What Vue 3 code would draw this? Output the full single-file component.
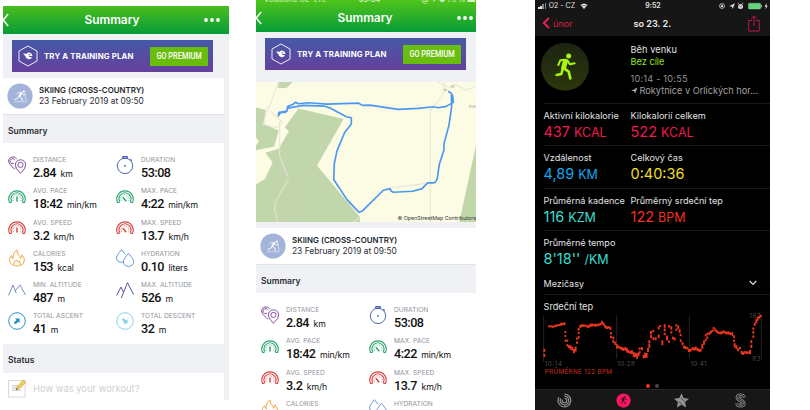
<script setup>
const stats = [
  { icon: 'pins', color: '#7d4a9c', label: 'DISTANCE', value: '2.84', unit: 'km' },
  { icon: 'watch', color: '#4a5fae', label: 'DURATION', value: '53:08', unit: '' },
  { icon: 'gauge', color: '#2aa56f', label: 'AVG. PACE', value: '18:42', unit: 'min/km', needle: 0 },
  { icon: 'gauge', color: '#2aa56f', label: 'MAX. PACE', value: '4:22', unit: 'min/km', needle: -40 },
  { icon: 'gauge', color: '#d8433f', label: 'AVG. SPEED', value: '3.2', unit: 'km/h', needle: 0 },
  { icon: 'gauge', color: '#d8433f', label: 'MAX. SPEED', value: '13.7', unit: 'km/h', needle: -40 },
  { icon: 'fire', color: '#f0a13a', label: 'CALORIES', value: '153', unit: 'kcal' },
  { icon: 'drops', color: '#5f95dd', label: 'HYDRATION', value: '0.10', unit: 'liters' },
  { icon: 'peaks', color: '#7286bb', label: 'MIN. ALTITUDE', value: '487', unit: 'm' },
  { icon: 'peaksHigh', color: '#51489d', label: 'MAX. ALTITUDE', value: '526', unit: 'm' },
  { icon: 'arrow', color: '#1f8fbd', label: 'TOTAL ASCENT', value: '41', unit: 'm', turn: 0 },
  { icon: 'arrow', color: '#7fd3e0', label: 'TOTAL DESCENT', value: '32', unit: 'm', turn: 90 },
]

const screens = [
  { id: 'plain', map: false, items: stats },
  { id: 'mapped', map: true, items: stats.slice(0, 8).map((t, i) => (i < 6 ? t : { ...t, value: '', unit: '' })) },
]

const workout = [
  [
    { label: 'Aktivní kilokalorie', value: '437', unit: 'KCAL', tone: 'pink' },
    { label: 'Kilokalorií celkem', value: '522', unit: 'KCAL', tone: 'pink' },
  ],
  [
    { label: 'Vzdálenost', value: '4,89', unit: 'KM', tone: 'blue' },
    { label: 'Celkový čas', value: '0:40:36', unit: '', tone: 'yellow' },
  ],
  [
    { label: 'Průměrná kadence', value: '116', unit: 'KZM', tone: 'cyan' },
    { label: 'Průměrný srdeční tep', value: '122', unit: 'BPM', tone: 'red' },
  ],
  [{ label: 'Průměrné tempo', value: "8'18''", unit: '/KM', tone: 'cyan' }],
]

// Heart-rate samples: x, centre y, bar height
const beats = [
  [43, 165, 8], [43, 180, 8], [57, 93, 5], [63, 93, 5], [68, 94, 6], [73, 93, 5], [78, 91, 6], [83, 90, 5], [88, 89, 5],
  [93, 87, 8], [98, 86, 6], [103, 85, 8], [106, 110, 5], [106, 122, 5], [107, 136, 6], [112, 136, 5], [112, 150, 6],
  [117, 154, 8], [122, 157, 12], [127, 160, 10], [132, 167, 12], [137, 161, 14], [141, 130, 5], [141, 142, 6],
  [146, 102, 7], [146, 113, 5], [146, 126, 6], [151, 93, 9], [156, 91, 7], [161, 91, 6], [166, 91, 5], [171, 93, 6],
  [176, 94, 8], [181, 90, 9], [186, 89, 8], [191, 89, 6], [196, 90, 8], [201, 89, 6], [206, 89, 7], [211, 86, 6],
  [216, 82, 10], [221, 87, 8], [226, 94, 9], [231, 97, 7], [236, 96, 6], [241, 99, 8], [243, 114, 6], [243, 125, 6],
  [250, 128, 7], [250, 139, 8], [256, 144, 10], [261, 153, 12], [266, 155, 7], [271, 158, 7], [276, 160, 10],
  [281, 162, 8], [286, 160, 10], [291, 165, 12], [296, 169, 8], [301, 171, 8], [306, 170, 10], [311, 178, 14],
  [316, 179, 12], [321, 182, 16], [326, 177, 10], [329, 160, 6], [329, 171, 6], [336, 160, 8], [341, 184, 10],
  [345, 180, 15], [350, 180, 14], [354, 164, 12], [358, 139, 8], [358, 151, 12], [363, 112, 10], [363, 124, 8],
  [370, 107, 6], [370, 130, 7], [377, 130, 8], [386, 98, 8], [386, 123, 10], [391, 92, 5], [397, 142, 14],
  [404, 92, 10], [404, 104, 8], [404, 116, 6], [411, 128, 14], [417, 93, 6], [417, 139, 6], [424, 98, 10],
  [424, 111, 6], [429, 128, 7], [434, 131, 8], [439, 90, 6], [439, 103, 6], [445, 96, 10], [449, 107, 9],
  [452, 119, 6], [452, 136, 7], [458, 145, 8], [462, 155, 8], [467, 157, 8], [472, 159, 6], [477, 165, 9],
  [482, 165, 7], [487, 160, 7], [492, 161, 8], [497, 159, 10], [502, 162, 8], [507, 165, 8], [512, 165, 7],
  [517, 153, 14], [522, 142, 12], [527, 120, 6], [527, 134, 7], [532, 116, 6], [532, 127, 6], [538, 114, 8],
  [543, 110, 8], [548, 106, 6], [551, 98, 5], [556, 104, 8], [561, 109, 8], [566, 112, 6], [571, 113, 7],
  [576, 112, 8], [581, 109, 7], [586, 112, 7], [591, 113, 7], [596, 113, 8], [601, 115, 7], [607, 116, 10],
  [612, 124, 7], [612, 136, 6], [614, 150, 12], [619, 155, 10], [624, 163, 8], [630, 158, 6], [635, 172, 9],
  [640, 174, 9], [645, 171, 6], [650, 172, 7], [655, 172, 6], [660, 170, 12], [664, 139, 8], [664, 153, 9],
  [670, 100, 6], [670, 111, 7], [670, 124, 6], [674, 87, 8], [679, 78, 12], [683, 70, 11], [688, 66, 7], [692, 62, 6],
]
</script>

<template>
  <main class="board">
    <section v-for="s in screens" :key="s.id" class="endo" :class="s.id">
      <div v-if="s.map" class="carrier">
        <span>Vodafone CZ&nbsp; LTE</span><span class="clock">09:54</span><span>@ ✈ ● 75 % ▬</span>
      </div>
      <header class="bar">
        <svg class="back" viewBox="0 0 6 14"><path d="M5.2 1 L.2 7 L5.2 13" /></svg>
        <h1>Summary</h1>
        <svg class="more" viewBox="0 0 16 4"><circle cx="2" cy="2" r="1.9" /><circle cx="8" cy="2" r="1.9" /><circle cx="14" cy="2" r="1.9" /></svg>
      </header>
      <div class="promo">
        <svg viewBox="0 0 20 22">
          <path class="hex" d="M10 1 L19 6 V16 L10 21 L1 16 V6 Z" />
          <path class="cap" d="M5 8.6 L8.6 8.8 Q10 7.2 12 7.7 Q14.6 8.6 14.4 11 H10.8 Q11.2 12.5 14.2 12 Q13 14.6 10.4 14.3 Q7.6 13.8 7.4 11.2 Z" />
          <path d="M10.4 9.8 H12.6" stroke="#584ca0" stroke-width=".8" />
        </svg>
        <span class="plan">TRY A TRAINING PLAN</span>
        <span class="premium"><span>GO PREMIUM</span></span>
      </div>

      <div v-if="s.map" class="map">
        <svg viewBox="33 36 660 419" preserveAspectRatio="none">
          <rect x="33" y="36" width="660" height="419" fill="#fcfbe4" />
          <g fill="#c2d6ac">
            <path d="M102 36 H143 L125 53 L98 55 Z" />
            <path d="M33 112 L62 120 L57 163 L101 181 L88 229 L33 240 V226 L42 213 L33 201 Z" />
            <path d="M160 115 L296 147 L216 286 L345 441 V455 H33 V342 L59 327 L83 277 L61 248 L101 236 L132 183 L119 173 Z" />
            <path d="M693 225 V455 H643 Z" />
          </g>
          <g fill="none" stroke="#e6e4d8" stroke-width="3">
            <path d="M100 36 L75 105 L64 125 L55 163 L95 173 L112 156 L75 123" />
            <path d="M104 154 V258 L131 326 L91 396 L89 420 L98 455" />
            <path d="M103 265 L121 314 L169 371 V396 L139 423 L123 455" stroke="#cad1b9" />
            <path d="M556 455 V120 L592 78 L600 36" />
            <path d="M578 36 L613 52 L628 43 L665 60 L693 50" />
            <path d="M345 441 L327 455 M436 353 L549 338" />
          </g>
          <g fill="#ccc9bd"><rect x="597" y="56" width="9" height="7" /><rect x="618" y="46" width="10" height="7" /></g>
          <text x="671" y="114" class="place">Rok</text>
          <path class="track" d="M100 137 L102 127 L113 125 L126 123 L128 109 L142 104 L151 97 L161 101 L190 98 L246 102 L340 99 L352 106 L374 105 L460 118 L520 115 L565 110 L579 113 L604 109 L625 97 L623 77 L617 68 L611 65 M619 70 L620 110 L612 165 L597 220 V239 L583 282 L577 323 Q574 337 565 338 H548 L530 356 L502 363 L445 366 L438 362 L435 355 L415 360 L351 423 L342 426 L306 388 L266 328 L268 280 L276 242 L299 187 L319 162 V143 L304 140 L258 115 L237 108 L175 106 L129 114 L123 126 L106 128 L100 137" />
        </svg>
        <span class="credit">© OpenStreetMap Contributors</span>
      </div>

      <div class="sport">
        <svg viewBox="0 0 26 26">
          <circle cx="13" cy="13" r="12.6" fill="#a4b3da" />
          <g stroke="#fff" stroke-linecap="round" stroke-linejoin="round" fill="none">
            <circle cx="16.8" cy="8.6" r=".9" fill="#fff" stroke-width=".5" />
            <path d="M14.4 10 L12.4 13" stroke-width="2" />
            <path d="M14.2 9.7 L11 9.7 L9.5 11.2 M15 10.4 L16 12 L18.2 11.5" stroke-width=".8" />
            <path d="M12.4 13.4 L14.8 15 L15.2 17.6 M11.8 13.4 L10.6 15.6 L7.8 16.4" stroke-width="1" />
            <path d="M18 10.6 L19 17.6 M7 18.8 H19.5" stroke-width=".5" />
          </g>
        </svg>
        <div><b>SKIING (CROSS-COUNTRY)</b><p>23 February 2019 at 09:50</p></div>
      </div>
      <h2>Summary</h2>
      <div class="grid">
        <div v-for="t in s.items" :key="t.label" class="stat">
          <svg class="glyph" viewBox="0 0 18 18" :stroke="t.color" :fill="t.color">
            <g v-if="t.icon === 'pins'" class="line">
              <path d="M7.3 12.3 Q6.3 13.3 5.6 12.1 Q0.5 8.1 .5 5 A4.5 4.5 0 0 1 8.8 3" /><path d="M6.9 4.2 A2.5 2.5 0 1 0 6 7.2" />
              <path d="M12.5 17.4 Q7.3 12.4 7.3 9 A5.2 5.2 0 0 1 17.7 9 Q17.7 12.4 12.5 17.4 Z" /><circle cx="12.5" cy="8.9" r="2.6" />
            </g>
            <g v-else-if="t.icon === 'watch'" class="line">
              <path d="M6.8 3 V.6 H11.2 V3 M14.2 3.3 L15.8 4.6 M7.3 2.2 H10.7" stroke-width="1.1" /><circle cx="9" cy="9.9" r="7.7" /><circle cx="9" cy="9.9" r=".6" />
            </g>
            <g v-else-if="t.icon === 'gauge'" class="line">
              <path d="M3.6 15.4 H1.5 A8.2 8.2 0 1 1 16.5 15.4 H14.4" stroke-width="1.1" />
              <path d="M3.9 14.8 A5.9 5.9 0 1 1 14.1 14.8" stroke-width="1.1" />
              <path d="M5.4 13.6 A4 4 0 1 1 12.6 13.6" stroke-width=".9" stroke-dasharray="1 1.2" />
              <path d="M9 9.6 V14.6" stroke-width="1.5" :transform="`rotate(${t.needle} 9 12.8)`" />
            </g>
            <g v-else-if="t.icon === 'fire'" class="line">
              <path d="M6 16.7 Q1 14.8 1.5 10.5 Q1.8 8 3.6 6.7 Q3.7 9.2 5.2 9.8 Q4.4 4.1 9 .9 Q8.4 4.3 11.2 6.4 Q12.5 7.6 12.5 9.5 Q14 8.2 14 5.8 Q16.7 8.7 16.4 11.5 Q16 15.7 12 16.7" />
              <path d="M7.6 17 Q5.3 15.8 6.2 13.2 Q6.7 12 8.5 11 Q8.4 12.4 9.6 13 Q10.8 12.8 11 11.7 Q12.8 14 11.7 16 Q10.5 17.6 7.6 17 Z" />
            </g>
            <g v-else-if="t.icon === 'drops'" class="line">
              <path d="M5.5 .7 Q.5 6.3 .5 9 Q.5 12.6 4.2 13.3 Q6.5 13.6 7.8 12.2 M5.5 .7 L9.1 5.4" />
              <path d="M12.5 4.4 Q17.7 10.2 17.7 12.7 A5.2 4.8 0 0 1 7.3 12.7 Q7.3 10.2 12.5 4.4 Z" />
            </g>
            <path v-else-if="t.icon === 'peaks'" class="line" d="M.6 14.4 L4.9 4 L8.2 12 M7 10 L12 4 L17.5 14" />
            <path v-else-if="t.icon === 'peaksHigh'" class="line" d="M.6 14.5 L5 6 L7.2 11 M5.3 17 L11.5 1.6 L17.6 13.6" />
            <g v-else :transform="`rotate(${t.turn} 9 9)`">
              <circle cx="9" cy="9" r="8.3" class="line" /><path d="M7 6.5 H11.6 V11.1 L10.2 9.8 L7.5 12.2 L5.9 10.7 L8.5 8 Z" stroke="none" />
            </g>
          </svg>
          <div class="info"><span class="label">{{ t.label }}</span><span v-if="t.value" class="value">{{ t.value }}<small v-if="t.unit">{{ t.unit }}</small></span></div>
        </div>
      </div>
      <template v-if="!s.map">
        <h2 class="status">Status</h2>
        <div class="note">
          <svg viewBox="0 0 19 19">
            <rect x=".6" y="1.6" width="16.5" height="16.5" fill="#fff" stroke="#d3d5d8" stroke-width=".9" />
            <path d="M4 6.8 H10 M4 9 H9 M4 11.2 H13" stroke="#aaa" stroke-width=".7" />
            <path d="M8 11 L9.3 7.4 L15.2 1 L17.8 3.2 L11.8 9.5 Z" fill="#f4cc59" stroke="#bd9146" stroke-width=".5" /><path d="M8 11 L8.7 9 L10 10.2 Z" fill="#555" />
          </svg>
          <span>How was your workout?</span>
        </div>
      </template>
    </section>

    <section class="watch">
      <header class="top">
        <div class="system">
          <div class="signal"><i></i><i></i><i></i><i></i><span>O2 - CZ</span>
            <svg viewBox="0 0 8 6"><path d="M.5 2 Q4 -1 7.5 2 L4 6 Z" fill="#ddd" /><path d="M1.6 3.2 Q4 1.4 6.4 3.2" stroke="#161616" stroke-width=".5" fill="none" /></svg></div>
          <b>9:52</b>
          <svg class="power" viewBox="0 0 50 8">
            <circle cx="4" cy="4" r="2.4" fill="none" stroke="#ddd" stroke-width=".8" /><rect x="3" y="3.2" width="2" height="1.8" fill="#ddd" />
            <path d="M11 4.2 L17 1.2 L14.6 7 L13.9 4.4 Z" fill="#ddd" />
            <circle cx="22.5" cy="4.4" r="2.5" fill="#ddd" /><path d="M19.8 1.7 L21 1 M25.2 1.7 L24 1" stroke="#ddd" stroke-width=".8" fill="none" /><path d="M21.2 3.5 L22.4 4.9 L24 3.6" stroke="#222" stroke-width=".6" fill="none" />
            <rect x="30.4" y="1.2" width="12.2" height="5.8" rx="1" fill="#62d578" stroke="#9bdaa5" stroke-width=".4" /><rect x="43" y="3" width="1" height="2.4" fill="#aaa" />
            <path d="M48.8 1 L46.5 4.5 H48 L47.5 7.3 L49.7 3.7 H48.3 Z" fill="#eee" />
          </svg>
        </div>
        <div class="nav">
          <div class="backlink"><svg viewBox="0 0 8 12"><path d="M7 1 L1.8 6 L7 11" /></svg><span>únor</span></div>
          <b>so 23. 2.</b>
          <svg class="share" viewBox="0 0 12 17"><path d="M4 5.5 H.7 V16 H11.3 V5.5 H8 M6 11 V1 M3.3 3.6 L6 .9 L8.7 3.6" /></svg>
        </div>
      </header>
      <div class="session">
        <svg class="runner" viewBox="30 125 150 150">
          <defs><linearGradient id="disc" x1="0" y1="0" x2="0" y2="1"><stop offset="0" stop-color="#1c2411" /><stop offset="1" stop-color="#2b370c" /></linearGradient></defs>
          <circle cx="105" cy="199" r="72" fill="url(#disc)" />
          <g fill="none" stroke="#a6f510" stroke-linecap="round" stroke-linejoin="round">
            <circle cx="116" cy="167" r="7.5" fill="#a6f510" stroke="none" />
            <path d="M106 183 L101 202" stroke-width="15" />
            <path d="M107 178 L91 180 L85 194 M112 180 L120 192 L134 189" stroke-width="6" />
            <path d="M102 204 L116 214 L121 234 M98 206 L94 221 L80 224" stroke-width="8" />
          </g>
        </svg>
        <div class="about"><p>Běh venku</p><p class="goal">Bez cíle</p><p class="when">10:14 - 10:55</p>
          <p class="where"><svg viewBox="0 0 7 7"><path d="M0 4 L6.5 .5 L4 6.8 L3.2 4 Z" /></svg>Rokytnice v Orlických hor...</p></div>
      </div>
      <div v-for="(row, i) in workout" :key="i" class="metrics">
        <div v-for="m in row" :key="m.label"><span class="name">{{ m.label }}</span><span class="num" :class="m.tone">{{ m.value }}<small v-if="m.unit">{{ m.unit }}</small></span></div>
      </div>
      <div class="splits"><span>Mezičasy</span><svg viewBox="0 0 8 6"><path d="M.7 1 L4 4.5 L7.3 1" /></svg></div>
      <h3>Srdeční tep</h3>
      <svg class="chart" viewBox="15 50 690 195">
        <path d="M41 60 V200 M260 60 V190 M478 60 V190 M694 60 V190" stroke="#242424" stroke-width="3" />
        <g class="tick"><text x="44" y="212" textLength="52">10:14</text><text x="262" y="212" textLength="53">10:28</text><text x="481" y="212" textLength="49">10:41</text><text x="658" y="69" textLength="34">167</text><text x="667" y="198" textLength="25">83</text></g>
        <rect v-for="(b, i) in beats" :key="i" :x="b[0] - 2.8" :y="b[1] - b[2] / 2 - .5" width="5.6" :height="b[2] + 1" fill="#f0371f" />
        <text x="44" y="236" class="avg" textLength="202">PRŮMĚRNÉ 122 BPM</text>
      </svg>
      <div class="pages"><i class="on"></i><i></i></div>
      <nav class="tabs">
        <svg viewBox="0 0 16 16" fill="none" stroke="#929292" stroke-width="1.3"><path d="M8 1.2 A6.8 6.8 0 1 1 2 4.6" /><path d="M8 3.4 A4.6 4.6 0 1 1 4 5.7" /><path d="M8 5.6 A2.4 2.4 0 1 1 5.8 7" /></svg>
        <svg viewBox="0 0 16 16"><circle cx="8" cy="8" r="7.6" fill="#fb165d" /><g fill="none" stroke="#161616" stroke-linecap="round" stroke-linejoin="round"><circle cx="9.2" cy="4.2" r=".5" /><path d="M8.2 5.8 L7.5 8.2" stroke-width="1.4" /><path d="M8.2 5.6 H6.4 L5.8 7.2 M8.9 5.8 L9.7 7 L11.3 6.7 M7.6 8.3 L9.2 9.3 L9.7 11.5 M7.3 8.4 L6.9 10 L5.3 10.6" stroke-width=".75" /></g></svg>
        <svg viewBox="0 0 16 16"><path d="M8 .3 L10.3 5.3 L16 6 L11.8 9.7 L13 15.4 L8 12.5 L3 15.4 L4.2 9.7 L0 6 L5.7 5.3 Z" fill="#929292" /><path d="M7.2 5 L11.6 9.2 M5.2 9.2 L9 12.6" stroke="#161616" stroke-width=".6" fill="none" /></svg>
        <svg viewBox="0 0 16 16" fill="none"><path class="coil wide" d="M11.4 4.9 C11.4 1.9 4.9 1.9 4.9 4.9 C4.9 7.9 11.3 8.1 11.3 11.1 C11.3 14.1 4.7 14.1 4.7 11.1" /><path class="coil gap" d="M11.4 4.9 C11.4 1.9 4.9 1.9 4.9 4.9 C4.9 7.9 11.3 8.1 11.3 11.1 C11.3 14.1 4.7 14.1 4.7 11.1" /><path class="coil core" d="M11.4 4.9 C11.4 1.9 4.9 1.9 4.9 4.9 C4.9 7.9 11.3 8.1 11.3 11.1 C11.3 14.1 4.7 14.1 4.7 11.1" /></svg>
      </nav>
    </section>
  </main>
</template>

<style>
body { background: #fff; overflow: hidden; }
</style>

<style scoped>
* { box-sizing: border-box; }
h1, h2, h3, p { margin: 0; }
svg { display: block; flex: none; }
.board { width: 810px; height: 410px; display: flex; align-items: flex-start; padding-left: 3px; overflow: hidden; font-family: Inter, Roboto, "Liberation Sans", sans-serif; background: #fff; }
.endo { background: #f0f1f4; overflow: hidden; flex: none; display: flex; flex-direction: column; color: #2b2d33; }
.plain { width: 226px; height: 394px; margin-top: 6px; }
.mapped { width: 220px; height: 410px; margin-left: 27px; position: relative; }
.carrier { position: absolute; top: -5.5px; left: 0; right: 0; height: 9px; padding: 0 1px 0 8px; display: grid; grid-template-columns: 1fr auto 1fr; color: #d7f2c8; font-size: 7.4px; line-height: 9px; white-space: nowrap; }
.carrier span:last-child { text-align: right; }
.clock { font-weight: 600; }
.bar { height: 28px; flex: none; display: flex; align-items: center; justify-content: space-between; background: linear-gradient(#4bbd1d, #069c38); color: #fff; padding-right: 9px; }
.mapped .bar { height: 32px; padding: 4px 3px 0 0; background: linear-gradient(#50c51a, #069c38); }
.back { width: 6px; height: 14px; fill: none; stroke: #fff; stroke-width: 1.5; }
.bar h1 { font-size: 11.9px; line-height: 16px; font-weight: 600; margin-left: 11px; }
.more { width: 16px; height: 4px; fill: #fff; }
.promo { width: 201px; height: 32px; flex: none; margin: 6px 0 0 9px; display: flex; align-items: center; padding: 0 5px 0 6px; background: linear-gradient(#4559a7, #65409c); color: #fff; }
.promo svg { width: 20px; height: 22px; }
.hex { fill: none; stroke: #fff; stroke-width: .9; }
.cap { fill: #fff; }
.plan { margin-left: 6px; font-size: 7.8px; font-weight: 700; letter-spacing: .16px; white-space: nowrap; flex: 1; }
.premium { width: 58px; height: 19px; background: #68bd0d; display: flex; align-items: center; justify-content: center; font-family: Roboto, sans-serif; font-size: 8.5px; font-weight: 500; white-space: nowrap; }
.premium span { transform: scaleX(.87); flex: none; }
.map { height: 140px; margin-top: 12px; flex: none; position: relative; }
.map svg { width: 220px; height: 140px; }
.track { fill: none; stroke: #4c98f0; stroke-width: 5; stroke-linejoin: round; stroke-linecap: round; }
.place { font-size: 12px; fill: #aaa; }
.credit { position: absolute; right: 0; bottom: 0; font-size: 5.3px; line-height: 7px; color: #333; white-space: nowrap; }
.sport { height: 37px; width: 221px; flex: none; margin-top: 6px; background: #fff; display: flex; align-items: center; padding-left: 4px; border-bottom: 1px solid #e2e3e6; }
.sport svg { width: 26px; height: 26px; margin-right: 6px; }
.sport b { display: block; font-size: 7.9px; line-height: 11px; font-weight: 600; color: #25272c; white-space: nowrap; }
.sport p { font-size: 8.4px; line-height: 11px; white-space: nowrap; }
h2 { font-size: 8.5px; font-weight: 600; line-height: 33px; height: 28px; padding-left: 5px; flex: none; }
.grid { width: 221px; flex: none; background: #fff; display: grid; grid-template-columns: 108px 108px; grid-auto-rows: 31.3px; padding: 11px 0 3px 5px; height: 201px; }
.stat { display: flex; }
.glyph { width: 18px; height: 18px; margin: 1.5px 7px 0 0; }
.line { fill: none; stroke-width: .95; }
.info { display: flex; flex-direction: column; white-space: nowrap; }
.label { font-size: 6.6px; line-height: 12px; color: #8f9299; letter-spacing: .05px; }
.value { font-family: Roboto, sans-serif; font-size: 12.6px; line-height: 14px; font-weight: 500; color: #111; letter-spacing: -.5px; }
.value small { font-family: Inter, sans-serif; font-size: 8.7px; font-weight: 400; letter-spacing: -.1px; margin-left: 4.5px; }
.status { line-height: 33px; height: 29px; }
.note { width: 221px; height: 27px; background: #fff; display: flex; align-items: center; gap: 6px; padding: 3px 0 0 5px; font-size: 9.4px; color: #cfd0d3; }
.note svg { width: 19px; height: 19px; }
.watch { width: 235px; height: 410px; margin-left: 59px; background: #000; color: #e2e2e2; font-family: Inter, "Liberation Sans", sans-serif; display: flex; flex-direction: column; flex: none; overflow: hidden; }
.top { height: 36px; background: #161616; flex: none; }
.system { height: 11px; display: grid; grid-template-columns: 1fr auto 1fr; align-items: center; padding: 0 2px 0 3px; font-size: 7px; }
.system b { font-weight: 600; font-size: 7px; }
.signal { display: flex; align-items: flex-end; gap: .7px; line-height: 8px; }
.signal i { width: 1.5px; background: #ddd; height: 2px; margin-bottom: 1px; }
.signal i:nth-child(2) { height: 3px; }
.signal i:nth-child(3) { height: 4.5px; background: #888; }
.signal i:nth-child(4) { height: 6px; background: #888; }
.signal span { margin: 0 4px 0 2px; }
.signal svg { width: 8px; height: 6px; margin-bottom: 1px; }
.power { width: 50px; height: 8px; justify-self: end; }
.nav { height: 24px; display: grid; grid-template-columns: 1fr auto 1fr; align-items: center; padding: 0 10.5px 0 7px; color: #eee; }
.nav b { font-size: 9.1px; font-weight: 600; padding-left: 3px; }
.backlink { display: flex; align-items: center; gap: 3px; font-size: 9.1px; color: #d91f4e; }
.backlink svg { width: 8px; height: 12px; fill: none; stroke: #e82052; stroke-width: 2; }
.share { width: 12px; height: 17px; justify-self: end; fill: none; stroke: #bd1742; stroke-width: 1; }
.session { height: 67px; flex: none; display: flex; padding: 6px 0 0 5px; }
.runner { width: 50px; height: 50px; }
.about { margin: 2px 0 0 40.5px; font-size: 9.2px; line-height: 11.7px; white-space: nowrap; }
.about p:first-child { letter-spacing: .1px; }
.goal { color: #96e51d; }
.about .when { margin-top: 5.5px; color: #929292; letter-spacing: .2px; }
.where { color: #a0a0a0; display: flex; align-items: center; gap: 2px; }
.where svg { width: 7px; height: 7px; fill: #aaa; }
.metrics { height: 42.3px; flex: none; border-top: 1px solid #191919; margin-left: 8.5px; display: grid; grid-template-columns: 87px 1fr; padding-top: 6px; }
.metrics > div { display: flex; flex-direction: column; white-space: nowrap; }
.name { font-size: 9.1px; line-height: 12px; }
.num { font-size: 14.5px; line-height: 19px; letter-spacing: 0; }
.num small { font-size: 12.5px; margin-left: 4px; }
.pink { color: #f0184f; }
.blue { color: #18a5ee; }
.yellow { color: #f0df28; }
.cyan { color: #3bddd1; }
.red { color: #f1301e; }
.splits { height: 23px; flex: none; margin-left: 8.5px; padding: 0 13px 0 0; border-bottom: 1px solid #191919; display: flex; align-items: center; justify-content: space-between; font-size: 9px; }
.splits svg { width: 8px; height: 6px; fill: none; stroke: #ddd; stroke-width: 1.2; }
h3 { margin: 0 0 0 8.5px; height: 16.5px; font-size: 9.2px; line-height: 23px; font-weight: 400; flex: none; }
.chart { width: 230px; height: 65px; flex: none; overflow: visible; }
.tick { font-size: 19px; fill: #4b4b4b; }
.avg { font-size: 19px; fill: #c92f1d; }
.pages { display: flex; justify-content: center; gap: 5px; height: 7px; margin-top: auto; align-items: center; flex: none; }
.pages i { width: 4px; height: 4px; border-radius: 50%; background: #484848; }
.pages .on { background: #f1311d; }
.tabs { height: 21px; flex: none; background: #171717; border-top: 1px solid #252525; display: grid; grid-template-columns: repeat(4, 58.7px); align-items: center; justify-items: center; }
.tabs svg { width: 15px; height: 15px; }
.coil { stroke: #929292; }
.wide { stroke-width: 4.2; }
.gap { stroke: #161616; stroke-width: 2.4; }
.core { stroke-width: 1; }
</style>
